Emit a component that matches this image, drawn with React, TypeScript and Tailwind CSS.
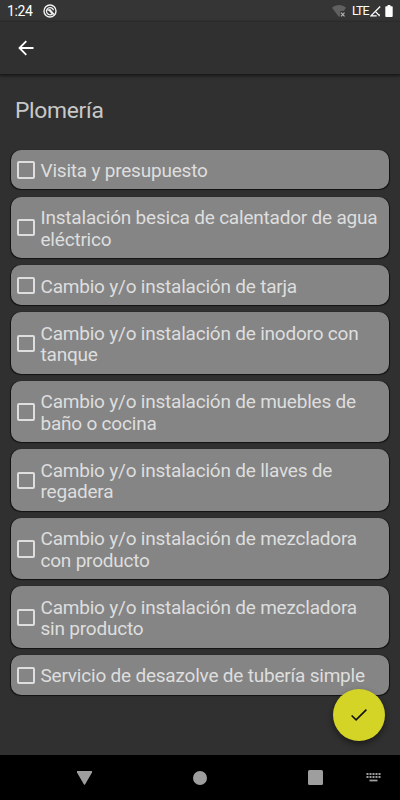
const services = [
  { lines: ["Visita y presupuesto"] },
  { lines: ["Instalación besica de calentador de agua", "eléctrico"] },
  { lines: ["Cambio y/o instalación de tarja"] },
  { lines: ["Cambio y/o instalación de inodoro con", "tanque"] },
  { lines: ["Cambio y/o instalación de muebles de", "baño o cocina"] },
  { lines: ["Cambio y/o instalación de llaves de", "regadera"] },
  { lines: ["Cambio y/o instalación de mezcladora", "con producto"] },
  { lines: ["Cambio y/o instalación de mezcladora", "sin producto"] },
  { lines: ["Servicio de desazolve de tubería simple"] },
];

const StatusBar = () => (
  <div className="flex h-[22px] items-center bg-[#353535] pl-[7px] pr-[7px] text-white">
    <span className="w-[35.5px] text-[14px] leading-[22px] tracking-[-0.4px]">1:24</span>
    <svg className="h-[14px] w-[14px]" viewBox="0 0 14 14" fill="none" stroke="#f2f2f2">
      <circle cx="7" cy="7" r="6" strokeWidth="1.4" />
      <path d="M9.8 9.5A3.6 3.6 0 1 1 10.5 6.2M4.5 6.2 7 5.8l4.2 4.8M6.2 6.3l3 3.3" strokeWidth="1.3" />
    </svg>
    <div className="ml-auto flex items-center">
      <svg className="h-3 w-[14px]" viewBox="0 0 14 12">
        <path d="M0 2.7C4 -.8 10 -.8 14 2.7L11.8 6H8.2v4.5L7 12Z" fill="#606060" />
        <path d="m9 7.7 3.5 3.6m0-3.6L9 11.3" stroke="#b5b5b5" strokeWidth="1.2" />
      </svg>
      <span className="ml-[6px] w-[18px] text-[12.5px] leading-[22px] tracking-[-1px]">LTE</span>
      <svg className="h-[11px] w-[11px]" viewBox="0 0 11 11" fill="none" stroke="#fff">
        <path d="M10.2.5.9 9.9h5.8" strokeWidth="1.3" />
        <path d="M5.3 5.4 8.8 9M9.2 8.2v2" strokeWidth="1.2" />
      </svg>
      <svg className="ml-[4px] h-[12px] w-2" viewBox="0 0 8 13">
        <path d="M2.5 0h3v1.3H7q1 0 1 1V12q0 1-1 1H1q-1 0-1-1V2.3q0-1 1-1h1.5Z" fill="#fff" />
      </svg>
    </div>
  </div>
);

const Header = () => (
  <div className="flex h-[52px] items-center bg-[#303030] pl-[18px] shadow-[0_1px_3px_1px_rgba(0,0,0,0.55)]">
    <svg className="h-4 w-4" viewBox="0 0 16 16" fill="none" stroke="#fff" strokeWidth="1.8">
      <path d="M15.5 8H2M8.3 1.2 1.5 8l6.8 6.8" />
    </svg>
  </div>
);

const ServiceCard = ({ lines }: { lines: string[] }) => (
  <div className="flex items-center rounded-[10px] bg-[#858585] pb-[8px] pl-[6px] pt-[10.4px] shadow-[0_0.5px_1px_0.5px_rgba(0,0,0,0.65)]">
    <div className="-mt-[1.6px] h-[17.5px] w-[17.5px] shrink-0 rounded-[2px] border-2 border-[#dedede]" />
    <div className="ml-[6px] whitespace-nowrap text-[19px] leading-[21.5px] tracking-[-0.21px] text-[#dedede]">
      {lines.map((line) => (
        <p key={line}>{line}</p>
      ))}
    </div>
  </div>
);

const NavigationBar = () => (
  <div className="flex h-[45px] items-center bg-black text-[#9e9e9e]">
    <svg className="ml-[77px] h-[14px] w-[15px]" viewBox="0 0 15 14" fill="currentColor">
      <path d="M0 0h15v1.5L8.2 13.2q-.7 1.1-1.4 0L0 1.5Z" />
    </svg>
    <div className="ml-[101px] h-[14px] w-[14px] rounded-full bg-current" />
    <div className="ml-[101px] h-[15px] w-[15px] rounded-[1.5px] bg-current" />
    <svg className="ml-[43px] h-[10px] w-[15px]" viewBox="0 0 15 10" stroke="currentColor">
      <path d="M.5 1h14M.5 4h14" strokeWidth="2" strokeDasharray="2 1" />
      <path d="M3.5 7.5h8" strokeWidth="1.8" />
    </svg>
  </div>
);

export default function App() {
  return (
    <div className="relative flex h-[800px] w-[400px] flex-col overflow-hidden bg-[#303030] font-[Roboto,sans-serif]">
      <StatusBar />
      <Header />
      <main className="flex-1 px-[11px] pt-[23px]">
        <h1 className="pl-1 text-[22.8px] leading-[28px] tracking-[-0.28px] text-[#c8c8c8]">Plomería</h1>
        <div className="mt-[24.6px] flex flex-col gap-[7.17px]">
          {services.map((service) => (
            <ServiceCard key={service.lines.join(" ")} lines={service.lines} />
          ))}
        </div>
      </main>
      <NavigationBar />
      <button className="absolute left-[333px] top-[689px] flex h-[52px] w-[52px] items-center justify-center rounded-full bg-[#d4d426] shadow-[0_3px_6px_rgba(0,0,0,0.45)]">
        <svg className="h-3 w-4" viewBox="0 0 16 12" fill="none" stroke="#111" strokeWidth="1.6">
          <path d="m.6 6.5 4.5 4.3L15.4.6" />
        </svg>
      </button>
    </div>
  );
}
